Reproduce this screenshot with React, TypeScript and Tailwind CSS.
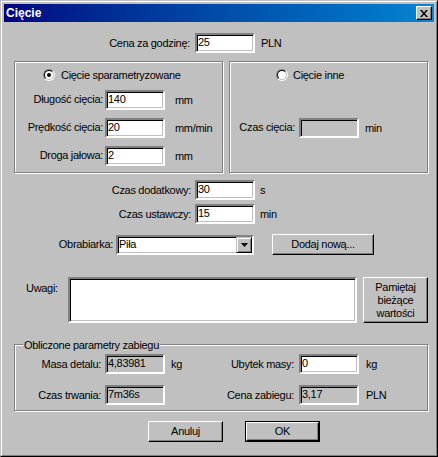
import React from "react";

const sunken =
    "border-2 border-t-[#808080] border-l-[#808080] border-b-white border-r-white shadow-[inset_1px_1px_0_#000,inset_-1px_-1px_0_#c0c0c0]";
const raised =
    "border border-t-white border-l-white border-b-black border-r-black shadow-[inset_-1px_-1px_0_#808080]";
const etched =
    "border border-[#808080] shadow-[inset_1px_1px_0_#fff,1px_1px_0_#fff]";

function Radio({ checked }: { checked?: boolean }) {
    return (
        <span className="relative inline-block w-[12px] h-[12px] shrink-0 rounded-full border border-t-[#808080] border-l-[#808080] border-b-white border-r-white">
            <span className="absolute inset-0 rounded-full border border-t-black border-l-black border-b-[#c0c0c0] border-r-[#c0c0c0] bg-white" />
            {checked && (
                <span className="absolute left-[3px] top-[3px] w-[4px] h-[4px] rounded-full bg-black" />
            )}
        </span>
    );
}

function Edit({ value, disabled }: { value?: string; disabled?: boolean }) {
    return (
        <div
            className={`h-[20px] w-[60px] shrink-0 ${sunken} ${
                disabled ? "bg-[#c0c0c0]" : "bg-white"
            } pl-[1px] leading-[14px] whitespace-nowrap`}
        >
            {value}
        </div>
    );
}

function Button({ children, className }: { children: React.ReactNode; className?: string }) {
    return (
        <div className={`flex items-center justify-center bg-[#c0c0c0] ${raised} ${className ?? ""}`}>
            {children}
        </div>
    );
}

export default function App() {
    return (
        <div className="w-[438px] h-[457px] bg-[#c0c0c0] border border-t-[#c0c0c0] border-l-[#c0c0c0] border-b-black border-r-black font-['Liberation_Sans',Arial,sans-serif] text-[11px] tracking-[-0.3px] text-black select-none">
            <div className="h-full border border-t-white border-l-white border-b-[#808080] border-r-[#808080] p-[2px]">
                {/* pasek tytułu */}
                <div className="h-[18px] flex items-center justify-between bg-gradient-to-r from-[#000080] to-[#1084d0] pl-[2px] pr-[2px]">
                    <span className="text-white font-bold text-[12px] tracking-normal">Cięcie</span>
                    <div className={`w-[16px] h-[14px] flex items-center justify-center bg-[#c0c0c0] ${raised}`}>
                        <svg width="8" height="7" viewBox="0 0 8 7">
                            <path d="M0 0h2l2 2.4 2-2.4h2l-3 3.5 3 3.5h-2l-2-2.4-2 2.4h-2l3-3.5z" fill="#000" />
                        </svg>
                    </div>
                </div>

                <div className="pl-[10px]">
                    {/* cena za godzinę */}
                    <div className="flex items-center mt-[11px]">
                        <div className="w-[176px] text-right">Cena za godzinę:</div>
                        <div className="ml-[5px]">
                            <Edit value="25" />
                        </div>
                        <div className="ml-[6px] pt-[1px]">PLN</div>
                    </div>

                    {/* rodzaj cięcia */}
                    <div className="flex mt-[8px] gap-[6px]">
                        <div className={`w-[209px] h-[112px] ${etched}`}>
                            <div className="flex items-center mt-[5px] pl-[28px]">
                                <Radio checked />
                                <span className="ml-[6px]">Cięcie sparametryzowane</span>
                            </div>
                            <div className="flex items-center mt-[6px]">
                                <div className="w-[88px] text-right">Długość cięcia:</div>
                                <div className="ml-[2px]">
                                    <Edit value="140" />
                                </div>
                                <div className="ml-[10px] pt-[1px]">mm</div>
                            </div>
                            <div className="flex items-center mt-[8px]">
                                <div className="w-[88px] text-right">Prędkość cięcia:</div>
                                <div className="ml-[2px]">
                                    <Edit value="20" />
                                </div>
                                <div className="ml-[10px] pt-[1px]">mm/min</div>
                            </div>
                            <div className="flex items-center mt-[8px]">
                                <div className="w-[88px] text-right">Droga jałowa:</div>
                                <div className="ml-[2px]">
                                    <Edit value="2" />
                                </div>
                                <div className="ml-[10px] pt-[1px]">mm</div>
                            </div>
                        </div>
                        <div className={`w-[199px] h-[112px] ${etched}`}>
                            <div className="flex items-center mt-[5px] pl-[46px]">
                                <Radio />
                                <span className="ml-[5px]">Cięcie inne</span>
                            </div>
                            <div className="flex items-center mt-[34px]">
                                <div className="w-[65px] text-right">Czas cięcia:</div>
                                <div className="ml-[4px]">
                                    <Edit disabled />
                                </div>
                                <div className="ml-[6px] pt-[1px]">min</div>
                            </div>
                        </div>
                    </div>

                    {/* czasy */}
                    <div className="flex items-center mt-[7px]">
                        <div className="w-[177px] text-right">Czas dodatkowy:</div>
                        <div className="ml-[4px]">
                            <Edit value="30" />
                        </div>
                        <div className="ml-[5px] pt-[1px]">s</div>
                    </div>
                    <div className="flex items-center mt-[4px]">
                        <div className="w-[177px] text-right">Czas ustawczy:</div>
                        <div className="ml-[4px]">
                            <Edit value="15" />
                        </div>
                        <div className="ml-[5px] pt-[1px]">min</div>
                    </div>

                    {/* obrabiarka */}
                    <div className="flex items-center mt-[10px]">
                        <div className="w-[99px] text-right">Obrabiarka:</div>
                        <div className={`ml-[3px] w-[138px] h-[20px] flex items-center justify-between bg-white ${sunken}`}>
                            <span className="pl-[1px] leading-[14px] self-start">Piła</span>
                            <div className="w-[16px] h-[16px] flex items-center justify-center bg-[#c0c0c0] border border-t-[#c0c0c0] border-l-[#c0c0c0] border-b-black border-r-black shadow-[inset_1px_1px_0_#fff,inset_-1px_-1px_0_#808080]">
                                <svg width="7" height="4" viewBox="0 0 7 4">
                                    <path d="M0 0h7L3.5 4z" fill="#000" />
                                </svg>
                            </div>
                        </div>
                        <Button className="ml-[18px] w-[102px] h-[21px]">Dodaj nową...</Button>
                    </div>

                    {/* uwagi */}
                    <div className="flex mt-[22px]">
                        <div className="w-[54px] pl-[12px] pt-[3px]">Uwagi:</div>
                        <div className={`w-[289px] h-[46px] bg-white ${sunken}`} />
                        <Button className="ml-[6px] w-[65px] h-[46px] text-center leading-[13px]">
                            Pamiętaj
                            <br />
                            bieżące
                            <br />
                            wartości
                        </Button>
                    </div>

                    {/* obliczone parametry */}
                    <div className={`relative mt-[21px] w-[414px] h-[67px] ${etched}`}>
                        <span className="absolute left-[8px] -top-[8px] px-[1px] bg-[#c0c0c0]">
                            Obliczone parametry zabiegu
                        </span>
                        <div className="flex items-center mt-[9px]">
                            <div className="w-[86px] text-right">Masa detalu:</div>
                            <div className="ml-[4px]">
                                <Edit value="4,83981" disabled />
                            </div>
                            <div className="ml-[6px] w-[40px] pt-[1px]">kg</div>
                            <div className="w-[83px] text-right">Ubytek masy:</div>
                            <div className="ml-[5px]">
                                <Edit value="0" />
                            </div>
                            <div className="ml-[7px] pt-[1px]">kg</div>
                        </div>
                        <div className="flex items-center mt-[11px]">
                            <div className="w-[86px] text-right">Czas trwania:</div>
                            <div className="ml-[4px]">
                                <Edit value="7m36s" disabled />
                            </div>
                            <div className="ml-[6px] w-[40px] pt-[1px]"></div>
                            <div className="w-[83px] text-right">Cena zabiegu:</div>
                            <div className="ml-[5px]">
                                <Edit value="3,17" disabled />
                            </div>
                            <div className="ml-[7px] pt-[1px]">PLN</div>
                        </div>
                    </div>

                    {/* przyciski */}
                    <div className="flex mt-[10px] pl-[134px]">
                        <Button className="w-[75px] h-[21px]">Anuluj</Button>
                        <div className="ml-[22px] border border-black">
                            <Button className="w-[73px] h-[19px]">OK</Button>
                        </div>
                    </div>
                </div>
            </div>
        </div>
    );
}
